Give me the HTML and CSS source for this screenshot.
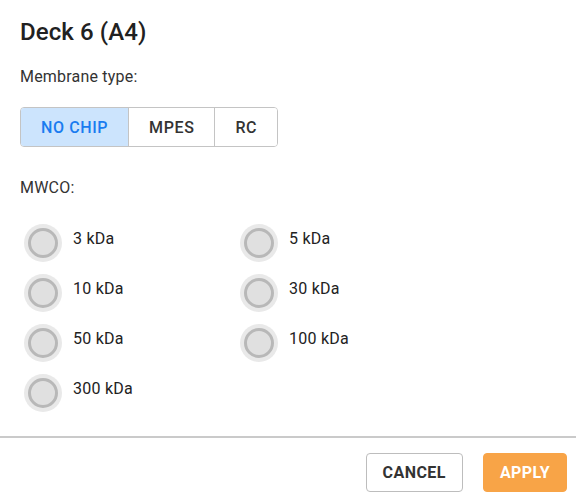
FILE: index.html
```html
<!DOCTYPE html>
<html>
<head>
<meta charset="utf-8">
<link rel="stylesheet" href="styles.css">
</head>
<body>
<div class="dialog">
  <div class="content">
    <h1 class="title">Deck 6 (A4)</h1>
    <div class="label">Membrane type:</div>
    <div class="seg">
      <button class="seg-btn active">NO CHIP</button>
      <button class="seg-btn">MPES</button>
      <button class="seg-btn">RC</button>
    </div>
    <div class="label mwco">MWCO:</div>
    <div class="radios">
      <label class="radio"><span class="halo"><span class="ring"></span></span><span class="rtext">3 kDa</span></label>
      <label class="radio"><span class="halo"><span class="ring"></span></span><span class="rtext">5 kDa</span></label>
      <label class="radio"><span class="halo"><span class="ring"></span></span><span class="rtext">10 kDa</span></label>
      <label class="radio"><span class="halo"><span class="ring"></span></span><span class="rtext">30 kDa</span></label>
      <label class="radio"><span class="halo"><span class="ring"></span></span><span class="rtext">50 kDa</span></label>
      <label class="radio"><span class="halo"><span class="ring"></span></span><span class="rtext">100 kDa</span></label>
      <label class="radio"><span class="halo"><span class="ring"></span></span><span class="rtext">300 kDa</span></label>
    </div>
  </div>
  <div class="footer">
    <button class="btn cancel">CANCEL</button>
    <button class="btn apply">APPLY</button>
  </div>
</div>
</body>
</html>
```
FILE: styles.css
```css
html, body {
  margin: 0;
  padding: 0;
  background: #fff;
}
body {
  font-family: Roboto, "Liberation Sans", sans-serif;
  color: #212121;
  width: 576px;
  height: 501px;
  overflow: hidden;
}
.dialog {
  display: flex;
  flex-direction: column;
}
.content {
  padding: 18px 20px 0 20px;
  height: 418px;
}
.title {
  margin: 0;
  font-size: 24px;
  font-weight: 500;
  line-height: 28px;
  color: #212121;
  letter-spacing: 0.1px;
}
.label {
  margin-top: 21px;
  font-size: 16px;
  line-height: 20px;
  color: #333;
  letter-spacing: 0.2px;
}
.seg {
  display: flex;
  margin-top: 20px;
  width: max-content;
  border: 1px solid #c4c4c4;
  border-radius: 4px;
  overflow: hidden;
}
.seg-btn {
  font-family: Roboto, "Liberation Sans", sans-serif;
  font-size: 16px;
  font-weight: 500;
  letter-spacing: 0.6px;
  color: #333;
  background: #fff;
  border: none;
  border-left: 1px solid #c4c4c4;
  padding: 0 20px;
  height: 38px;
  margin: 0;
  cursor: pointer;
}
.seg-btn:first-child {
  border-left: none;
}
.seg-btn.active {
  background: #cce4fd;
  color: #1a7cf0;
}
.mwco {
  margin-top: 31px;
}
.radios {
  display: grid;
  grid-template-columns: 216px 216px;
  row-gap: 12px;
  margin-top: 26px;
  margin-left: 4px;
}
.radio {
  display: flex;
  align-items: center;
  height: 38px;
  gap: 11px;
  font-size: 16px;
  line-height: 20px;
  letter-spacing: 0.25px;
  color: #222;
}
.halo {
  width: 38px;
  height: 38px;
  border-radius: 50%;
  background: #e9e9e9;
  display: flex;
  align-items: center;
  justify-content: center;
  flex: none;
}
.ring {
  width: 24px;
  height: 24px;
  border-radius: 50%;
  border: 3px solid #b8b8b8;
  background: #e0e0e0;
}
.rtext {
  margin-top: -8px;
}
.footer {
  border-top: 2px solid #cacaca;
  display: flex;
  justify-content: flex-end;
  gap: 20px;
  padding: 15px 9px 0 0;
}
.btn {
  font-family: Roboto, "Liberation Sans", sans-serif;
  font-size: 16px;
  font-weight: 700;
  letter-spacing: 0.45px;
  height: 39px;
  padding: 0 16px;
  border-radius: 4px;
  margin: 0;
  cursor: pointer;
}
.cancel {
  background: #fff;
  color: #333;
  border: 1px solid #bdbdbd;
}
.apply {
  background: #f8a447;
  color: #fff;
  border: 1px solid #f8a447;
}
```
